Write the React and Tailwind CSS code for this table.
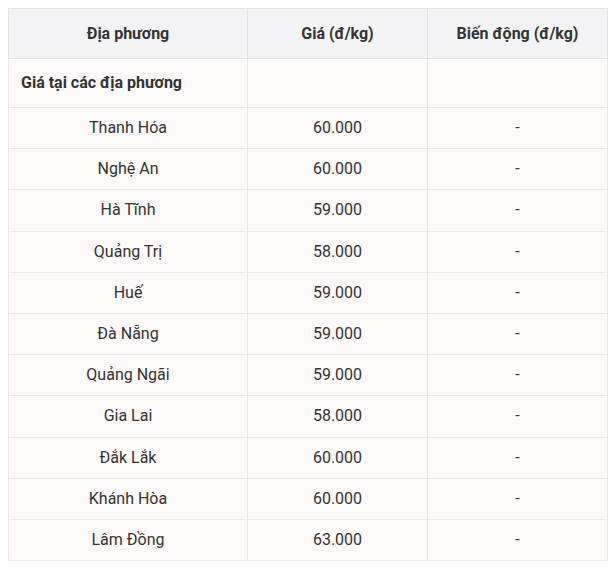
import React from 'react';

const rows = [
  ['Thanh Hóa', '60.000'],
  ['Nghệ An', '60.000'],
  ['Hà Tĩnh', '59.000'],
  ['Quảng Trị', '58.000'],
  ['Huế', '59.000'],
  ['Đà Nẵng', '59.000'],
  ['Quảng Ngãi', '59.000'],
  ['Gia Lai', '58.000'],
  ['Đắk Lắk', '60.000'],
  ['Khánh Hòa', '60.000'],
  ['Lâm Đồng', '63.000'],
];

export default function App() {
  return (
    <div className="min-h-[572px] bg-white pt-2 pl-2 font-['Roboto',sans-serif] text-[#333]">
      <table className="w-[599px] table-fixed border-collapse text-[16px]">
        <colgroup>
          <col className="w-[239px]" />
          <col className="w-[180px]" />
          <col className="w-[180px]" />
        </colgroup>
        <thead>
          <tr className="h-[50px] bg-[#f3f3f5]">
            <th className="border border-[#e2e0e0] font-bold">Địa phương</th>
            <th className="border border-[#e2e0e0] font-bold">Giá (đ/kg)</th>
            <th className="border border-[#e2e0e0] font-bold">Biến động (đ/kg)</th>
          </tr>
        </thead>
        <tbody className="bg-[#fdf9f9]">
          <tr className="h-[49px]">
            <td className="border border-[#ebe6e6] px-3 text-left font-bold">Giá tại các địa phương</td>
            <td className="border border-[#ebe6e6]"></td>
            <td className="border border-[#ebe6e6]"></td>
          </tr>
          {rows.map(([name, price]) => (
            <tr key={name} className="h-[41.2px]">
              <td className="border border-[#ebe6e6] text-center">{name}</td>
              <td className="border border-[#ebe6e6] text-center">{price}</td>
              <td className="border border-[#ebe6e6] text-center">-</td>
            </tr>
          ))}
        </tbody>
      </table>
    </div>
  );
}
